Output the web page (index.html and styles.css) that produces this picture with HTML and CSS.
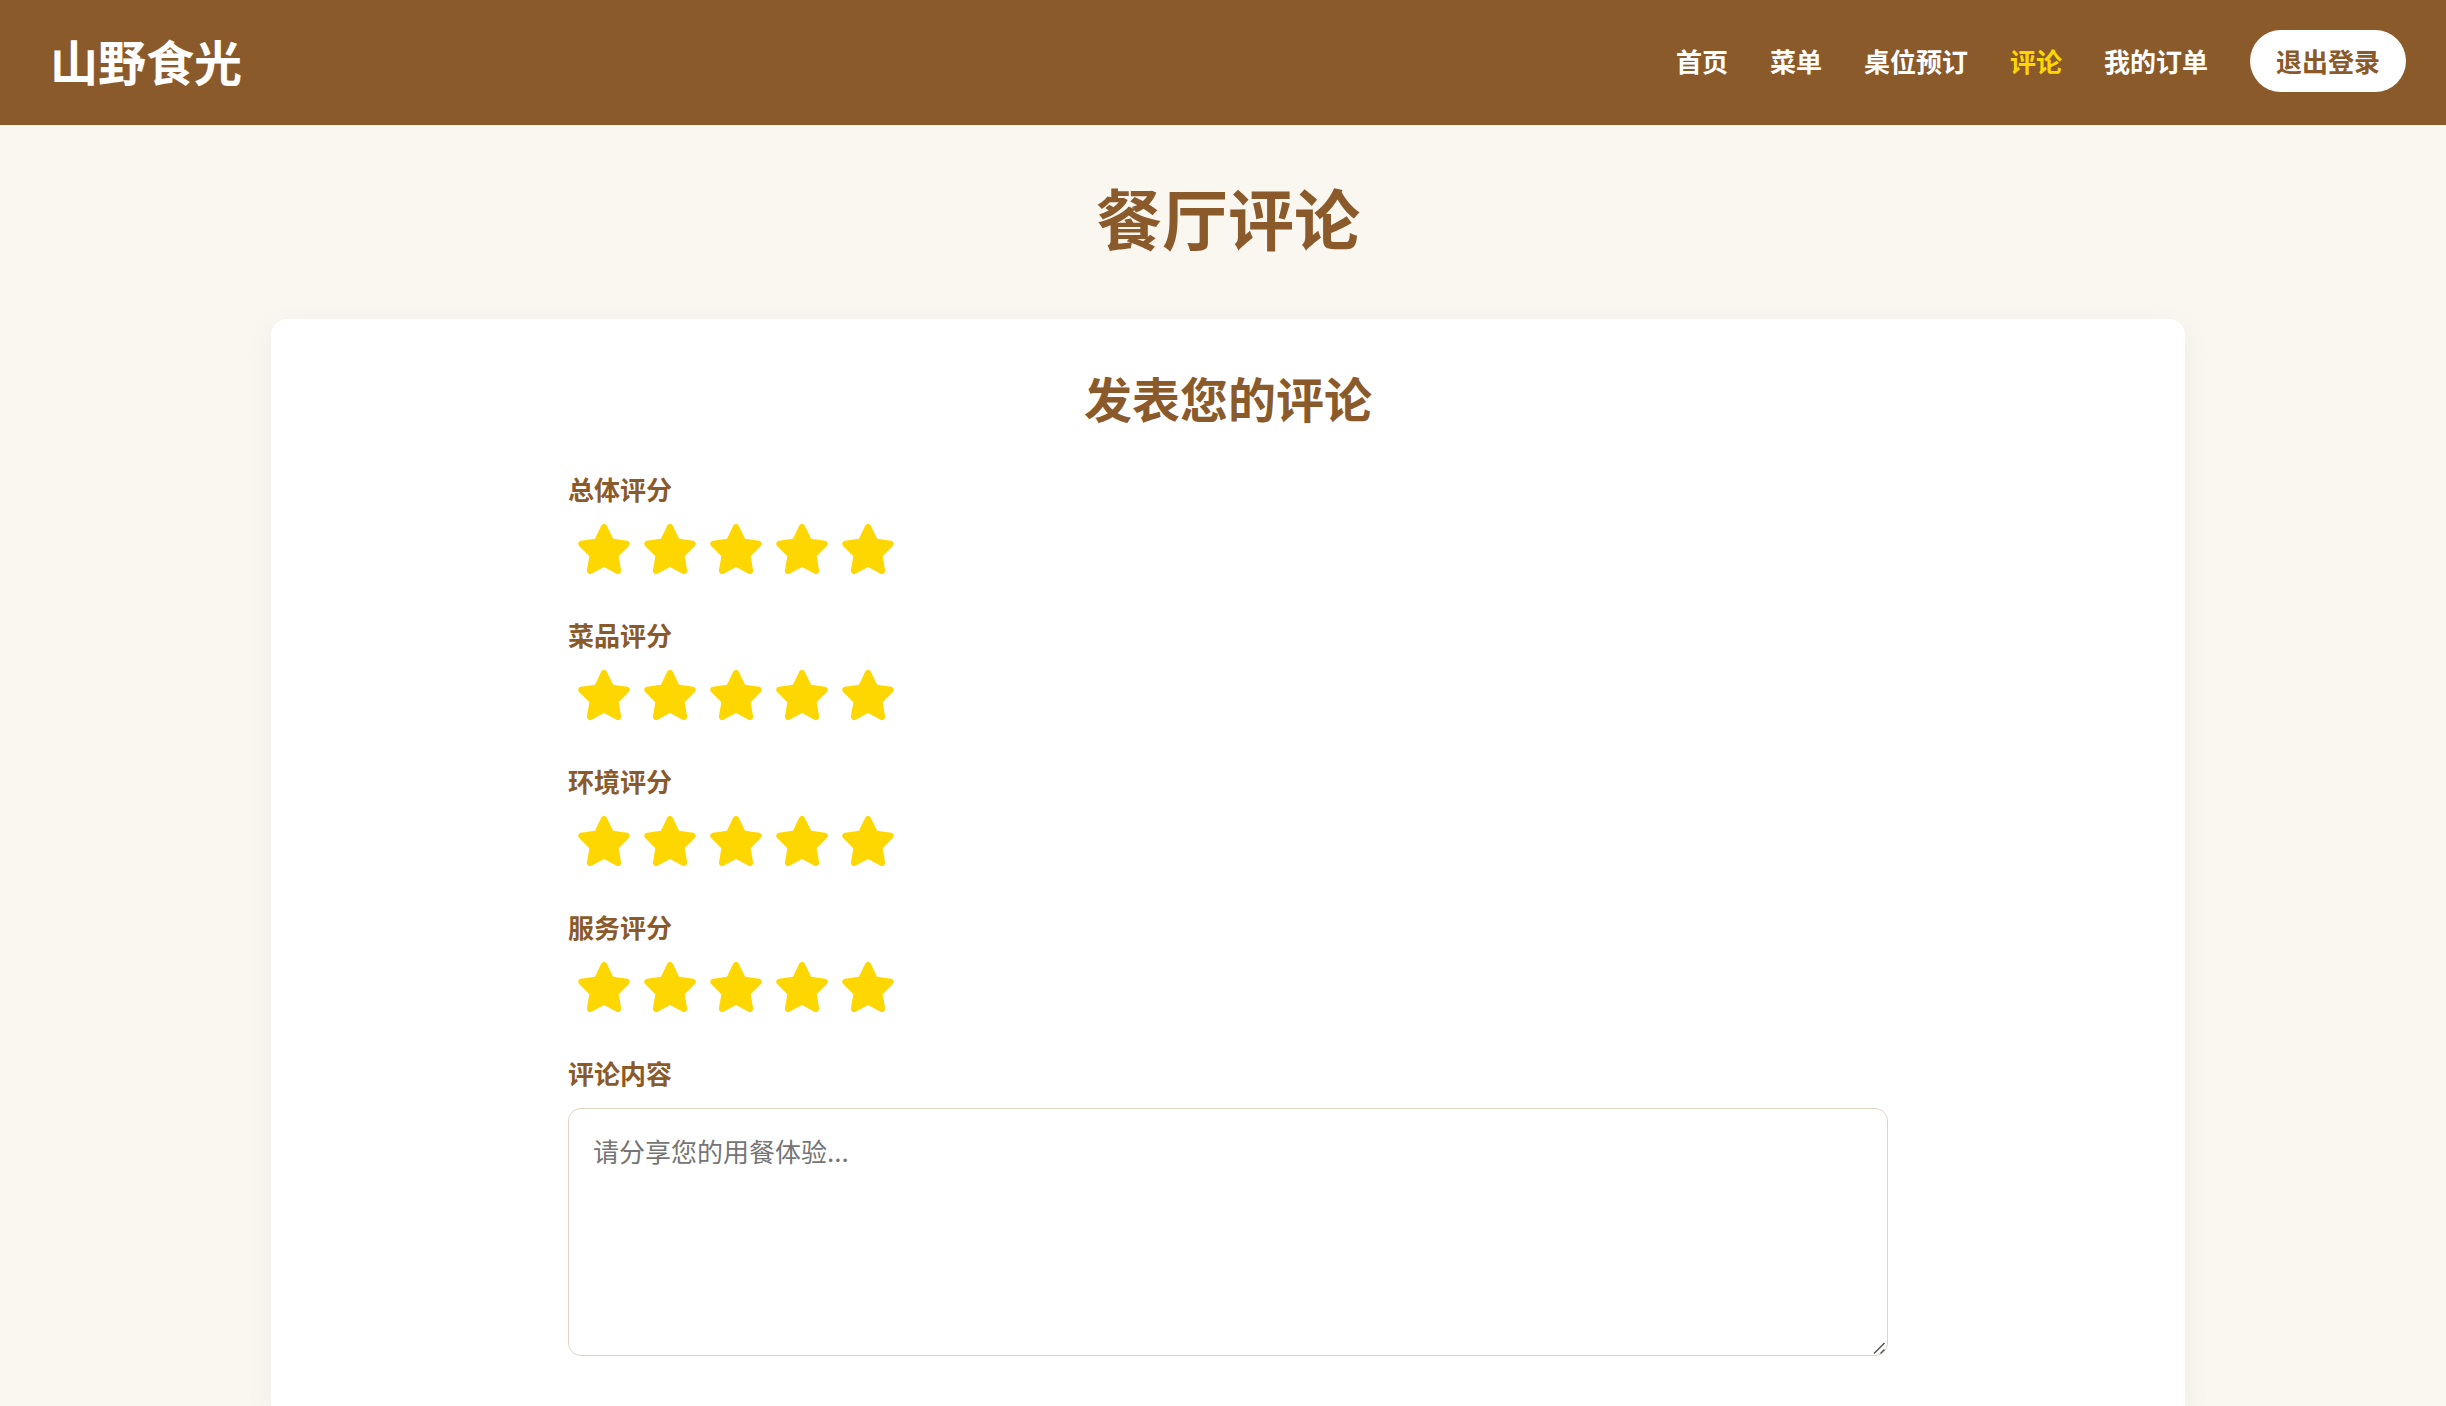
FILE: index.html
```html
<!DOCTYPE html>
<html lang="zh-CN">
<head>
<meta charset="utf-8">
<meta name="viewport" content="width=device-width, initial-scale=1">
<title>餐厅评论</title>
<link rel="stylesheet" href="styles.css">
</head>
<body>
<svg class="sprite" aria-hidden="true">
  <symbol id="star" viewBox="0 0 576 512"><path d="M316.900 18C311.600 7 300.400 0 288.100 0s-23.400 7-28.800 18L195 150.300 51.400 171.500c-12 1.800-22 10.200-25.700 21.700s-.7 24.200 7.900 32.700L137.800 329 113.200 474.700c-2 12 3 24.200 12.900 31.300s23 8 33.800 2.300l128.300-68.500 128.300 68.500c10.800 5.700 23.900 4.900 33.800-2.300s14.900-19.300 12.900-31.300L438.500 329 542.700 225.900c8.600-8.500 11.700-21.200 7.900-32.700s-13.700-19.900-25.700-21.700L381.200 150.300 316.900 18z"/></symbol>
</svg>
<header class="header">
  <div class="logo">山野食光</div>
  <nav class="nav">
    <a href="#">首页</a>
    <a href="#">菜单</a>
    <a href="#">桌位预订</a>
    <a href="#" class="active">评论</a>
    <a href="#">我的订单</a>
    <button type="button" class="logout">退出登录</button>
  </nav>
</header>
<main class="main">
  <h1 class="title">餐厅评论</h1>
  <section class="card">
    <h2 class="subtitle">发表您的评论</h2>
    <form class="form">
      <fieldset class="rating">
        <legend>总体评分</legend>
        <div class="stars">
          <label><input type="radio" name="overall" value="1" aria-label="1"><svg><use href="#star"/></svg></label>
          <label><input type="radio" name="overall" value="2" aria-label="2"><svg><use href="#star"/></svg></label>
          <label><input type="radio" name="overall" value="3" aria-label="3"><svg><use href="#star"/></svg></label>
          <label><input type="radio" name="overall" value="4" aria-label="4"><svg><use href="#star"/></svg></label>
          <label><input type="radio" name="overall" value="5" aria-label="5" checked><svg><use href="#star"/></svg></label>
        </div>
      </fieldset>
      <fieldset class="rating">
        <legend>菜品评分</legend>
        <div class="stars">
          <label><input type="radio" name="food" value="1" aria-label="1"><svg><use href="#star"/></svg></label>
          <label><input type="radio" name="food" value="2" aria-label="2"><svg><use href="#star"/></svg></label>
          <label><input type="radio" name="food" value="3" aria-label="3"><svg><use href="#star"/></svg></label>
          <label><input type="radio" name="food" value="4" aria-label="4"><svg><use href="#star"/></svg></label>
          <label><input type="radio" name="food" value="5" aria-label="5" checked><svg><use href="#star"/></svg></label>
        </div>
      </fieldset>
      <fieldset class="rating">
        <legend>环境评分</legend>
        <div class="stars">
          <label><input type="radio" name="ambience" value="1" aria-label="1"><svg><use href="#star"/></svg></label>
          <label><input type="radio" name="ambience" value="2" aria-label="2"><svg><use href="#star"/></svg></label>
          <label><input type="radio" name="ambience" value="3" aria-label="3"><svg><use href="#star"/></svg></label>
          <label><input type="radio" name="ambience" value="4" aria-label="4"><svg><use href="#star"/></svg></label>
          <label><input type="radio" name="ambience" value="5" aria-label="5" checked><svg><use href="#star"/></svg></label>
        </div>
      </fieldset>
      <fieldset class="rating">
        <legend>服务评分</legend>
        <div class="stars">
          <label><input type="radio" name="service" value="1" aria-label="1"><svg><use href="#star"/></svg></label>
          <label><input type="radio" name="service" value="2" aria-label="2"><svg><use href="#star"/></svg></label>
          <label><input type="radio" name="service" value="3" aria-label="3"><svg><use href="#star"/></svg></label>
          <label><input type="radio" name="service" value="4" aria-label="4"><svg><use href="#star"/></svg></label>
          <label><input type="radio" name="service" value="5" aria-label="5" checked><svg><use href="#star"/></svg></label>
        </div>
      </fieldset>
      <div class="field">
        <label class="field-label" for="content">评论内容</label>
        <textarea id="content" placeholder="请分享您的用餐体验..."></textarea>
      </div>
    </form>
  </section>
</main>
</body>
</html>
```
FILE: styles.css
```css
* {
  box-sizing: border-box;
  margin: 0;
  padding: 0;
}

body {
  display: flex;
  flex-direction: column;
  min-height: 100vh;
  background: #faf6f0;
  color: #8b5a2b;
  font-family: "Noto Sans CJK SC", sans-serif;
  font-size: 26px;
  line-height: 42px;
}

.sprite {
  position: absolute;
  width: 0;
  height: 0;
}

.header {
  display: flex;
  align-items: center;
  justify-content: space-between;
  padding: 22px 40px 26px 50px;
  background: #8b5a2b;
  color: #fff;
}

.logo {
  font-size: 48px;
  font-weight: 700;
  line-height: 77px;
}

.nav {
  display: flex;
  align-items: center;
  gap: 42px;
  font-weight: 700;
}

.nav a {
  color: #fff;
  text-decoration: none;
}

.nav .active {
  color: #ffd700;
}

.logout {
  height: 62px;
  padding: 0 26px;
  border: 0;
  border-radius: 32px;
  background: #fff;
  color: #8b5a2b;
  font: inherit;
}

.main {
  display: flex;
  flex: 1;
  flex-direction: column;
  align-items: center;
  padding: 38px 32px 0 42px;
}

.title {
  margin-bottom: 50px;
  font-size: 66px;
  line-height: 106px;
}

.card {
  flex: 1;
  width: 100%;
  max-width: 1914px;
  padding: 40px 50px 32px;
  border-radius: 16px 16px 0 0;
  background: #fff;
  box-shadow: 0 8px 32px rgba(0, 0, 0, 0.05);
}

.subtitle {
  margin-bottom: 32px;
  font-size: 48px;
  line-height: 77px;
  text-align: center;
}

.form {
  max-width: 1320px;
  margin: 0 auto;
}

.rating {
  margin-bottom: 40px;
  border: 0;
}

.rating legend,
.field-label {
  display: block;
  font-weight: 700;
}

.stars {
  display: flex;
  gap: 8px;
  padding: 14px 0 0 7px;
}

.stars label {
  height: 50px;
  cursor: pointer;
}

.stars input {
  position: absolute;
  opacity: 0;
}

.stars svg {
  display: block;
  width: 58px;
  height: 50px;
  fill: #ffd700;
}

.field-label {
  margin-bottom: 14px;
}

textarea {
  display: block;
  width: 100%;
  height: 248px;
  padding: 24px;
  border: 1px solid #e0d5c5;
  border-radius: 13px;
  background: #fff;
  color: #333;
  font: inherit;
  line-height: 36px;
  resize: vertical;
}

textarea::placeholder {
  color: #757575;
}

textarea::-webkit-resizer {
  background: url("data:image/svg+xml,%3Csvg xmlns='http://www.w3.org/2000/svg' width='15' height='15'%3E%3Cpath d='M2 13.500 12.500 3M8.500 13.500l4-4' stroke='%23555' stroke-width='1.500'/%3E%3C/svg%3E") right bottom no-repeat;
}
```
